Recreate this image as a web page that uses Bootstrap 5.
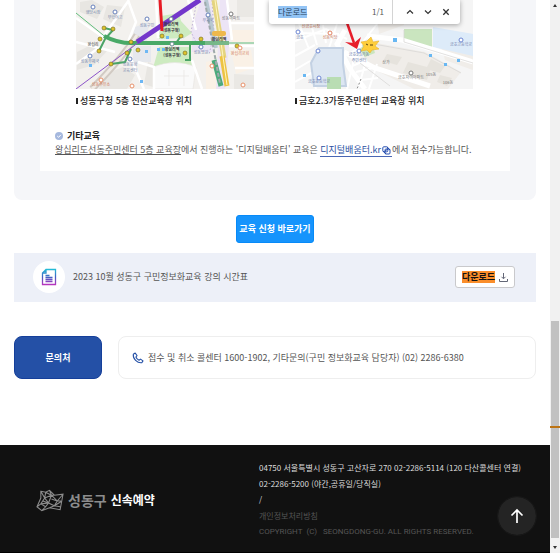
<!DOCTYPE html>
<html lang="ko">
<head>
<meta charset="utf-8">
<meta name="viewport" content="width=device-width, initial-scale=1">
<title>성동구 신속예약</title>
<link href="https://cdn.jsdelivr.net/npm/bootstrap@5.3.0/dist/css/bootstrap.min.css" rel="stylesheet">
<style>
body{font-family:"Noto Sans CJK KR",sans-serif;font-size:9px;line-height:14px;color:#555;background:#fff}
.page-main{padding:0 14px}
.info-panel{background:#f5f6f9;border-radius:0 0 8px 8px;padding:0 26px 29px}
.info-body{background:#fff;padding-bottom:14px}
.maps{display:grid;grid-template-columns:1fr 1fr;gap:41px;padding:0 37px 0 36px}
.maps svg{display:block;width:100%;height:89px}
.maps circle{r:2px}
.maps figcaption{color:#222;font-weight:500;margin-top:5px;white-space:nowrap}
.maps figcaption::before{content:"";display:inline-block;width:2px;height:6px;background:#222;margin-right:2px}
.etc{padding:21px 15px 0}
.etc h2{font-size:9px;line-height:14px;color:#222}
.etc a{color:#274e9f;text-decoration:none;border-bottom:1px solid #4966b4}
.etc a svg{margin:0 1px}
.apply-btn{--bs-btn-bg:#1694fc;--bs-btn-border-color:#078af8;--bs-btn-color:#fff;--bs-btn-hover-bg:#078af8;--bs-btn-hover-color:#fff;--bs-btn-font-size:9px;--bs-btn-padding-x:2px;--bs-btn-padding-y:6px;--bs-btn-border-radius:3px;line-height:14px;margin:15px 0 10px}
.file-bar{background:#edf0f8;padding:8px 21px 9px 19px}
.file-icon{width:32px;height:32px;background:#fff}
.down-btn{--bs-btn-bg:#fff;--bs-btn-border-color:#c9c9cc;--bs-btn-color:#222;--bs-btn-font-size:9px;--bs-btn-padding-x:6px;--bs-btn-padding-y:4px;--bs-btn-border-radius:3px;line-height:14px}
.found{background:#fa8e2b;color:#111;line-height:12px}
.contact{margin-top:34px;margin-bottom:66px;gap:16px}
.contact-title{width:88px;background:#2450a6;border:1px solid #153f9a;border-radius:8px;color:#fff;font-size:9px;line-height:14px}
.contact-info{border:1px solid #eee;border-radius:8px;padding:14px 13px 13px}
.site-footer{background:#111;border-bottom:1px solid #000;color:#ddd;font-size:8px;line-height:16px;padding:15px 14px 12px 36px}
.brand{width:223px}
.brand-gu{font-size:14px;line-height:18px;color:#8c8c8c}
.brand-name{font-size:12px;line-height:18px;color:#fff}
.dim,.dim a{color:#555;text-decoration:none}
.copyright{font-family:Roboto,sans-serif}
.top-btn{right:14px;bottom:17px;width:38px;height:38px;background:#242424;outline:1px solid #181818}
.find-box{left:269px;top:0;width:191px;height:24px;background:#fff;border-radius:0 0 3px 3px;box-shadow:0 1px 5px rgba(0,0,0,.35);padding:0 9px;font-size:8px;z-index:3}
.find-box input{width:80px;border:0;padding:0;outline:0;font-size:8px;line-height:12px;height:12px;color:#27425c;background:linear-gradient(#93c4f5,#93c4f5) left/29px 100% no-repeat}
.find-box .icon-btn{border:0;background:none;padding:0;width:10px;display:flex}
.scroll-track{width:10px;background:#f1f1f1}
.scroll-thumb{width:8px;background:#c1c1c1;flex:216 0 0}
.scroll-rest{flex:312 0 0}
.scroll-mark{top:77%;height:2px;background:#bd7414}
</style>
<script src="https://cdn.jsdelivr.net/npm/bootstrap@5.3.0/dist/js/bootstrap.bundle.min.js"></script>
</head>
<body>
<div class="d-flex min-vh-100 position-relative">
<div class="find-box position-absolute d-flex align-items-center" role="search">
  <input type="text" value="다운로드" aria-label="페이지에서 찾기">
  <span class="ms-auto me-2">1/1</span>
  <span class="vr me-2"></span>
  <div class="d-flex gap-2 ms-1">
    <button class="icon-btn" aria-label="이전"><svg width="10" height="10" viewBox="0 0 10 10" fill="none" stroke="#333" stroke-width="1.2"><path d="M2 6.5l3-3 3 3"/></svg></button>
    <button class="icon-btn" aria-label="다음"><svg width="10" height="10" viewBox="0 0 10 10" fill="none" stroke="#333" stroke-width="1.2"><path d="M2 3.5l3 3 3-3"/></svg></button>
    <button class="icon-btn" aria-label="닫기"><svg width="10" height="10" viewBox="0 0 10 10" fill="none" stroke="#333" stroke-width="1.3"><path d="M2.3 2.3l5.4 5.4M7.7 2.3L2.3 7.7"/></svg></button>
  </div>
</div>
<div class="d-flex flex-column flex-grow-1">
<main class="page-main flex-grow-1">
  <section class="info-panel">
    <div class="info-body">
      <div class="maps">
        <figure class="m-0">
          <svg viewBox="0 0 178 89" preserveAspectRatio="xMidYMid slice" role="img" aria-label="성동구청 약도" font-size="4" text-anchor="middle" fill="#7486ad">
            <path fill="#f3f1ee" d="M0 0h178v89H0z"/>
            <path fill="#e8e6e2" d="M4 2l12-2 12 7-7 12-17-7zM31 5l18 2-4 20-18-8zM1 52l18-9 12 8-13 14-17 5zM27 75l20-8 12 8-8 14H23zM72 62l10 4-5 21-9-3zM92 70l20-2 4 14-22 3z"/>
            <path fill="#faf1e6" d="M156 30h22v12h-22zM130 62l12-3v30h-12zM155 50h20l3 18-18 6z"/>
            <path fill="#e6e8ed" d="M59 27l14-5-2 20-16 1zM57 46h18v16H57z"/>
            <path fill="#eae8e4" d="M161 0h17v17h-17zM158 74l20 1v14h-20z"/>
            <path fill="#cdebc0" d="M85 16l18-3 2 8 11 12-8 5-25 1zM83 47h31l2 21-19-4-20 4z"/>
            <path fill="#fafafa" stroke="#e5e3df" stroke-width=".6" d="M77 67q22-9 43 0l-3 22H78zM88 76h25M93 70v16M108 70v16"/>
            <path fill="#ece4f5" d="M125 0h10l4 35-2 17h-21V28zM144 0h8l3 25-6 64h-9z"/>
            <path stroke="#fff" stroke-width="2.5" fill="none" d="M0 18l27 19L53 0M0 42l39 10M52 0l8 22L50 47l18 42M0 64l24-17M80 0l2 38M112 0l8 30M116 60l10 29M151 0l5 40M154 23h24M153 46h25M159 68h19M62 62l16 5v22"/>
            <path stroke="#d1cac3" stroke-width="7" fill="none" d="M61 35Q48 56 16 89"/>
            <path stroke="#f0ebe5" stroke-width="3" fill="none" d="M61 35Q48 56 16 89"/>
            <path stroke="#bdaed3" stroke-dasharray="1.5 2" fill="none" d="M121 0l-6 32 9 18M136 0l2 33-5 22M86 36l9-9 14 12"/>
            <path stroke="#b7c8d2" stroke-width="4" d="M130 0l10 48"/>
            <path stroke="#4caa7c" stroke-width="5" d="M138 60l7 26"/>
            <path stroke="#9faaac" stroke-width="2" stroke-dasharray="4 2" d="M129 2l15 82"/>
            <path stroke="#e4d480" stroke-width="5" d="M138 0l10 58"/>
            <path stroke="#edc344" stroke-width="5" d="M146 56l5 30"/>
            <path stroke="#fff6be" stroke-width="1" d="M139 0l12 85"/>
            <path stroke="#62bd7d" stroke-width="1" fill="none" d="M0 13l32 26M128 43h50"/>
            <path stroke="#49a967" stroke-width="4" fill="none" d="M28 36Q43 44 59 43H130"/>
            <path stroke="#77b889" stroke-width="4" d="M129 43h24"/>
            <path stroke="#4ba467" stroke-width="2" fill="none" d="M28 28l9 2-8 9-6 12M55 49l-6 13-14 2M105 36l-5 7M114 44v16h-5"/>
            <path stroke="#8c54c9" stroke-width="1" fill="none" d="M0 89l51-38 12-9"/>
            <path stroke="#7337cb" stroke-width="5" d="M61 42L124 0"/>
            <g stroke="#70651c" stroke-width=".6" fill="#dcc32d"><circle cx="28" cy="28" r="2"/><circle cx="37" cy="29" r="2"/><circle cx="23" cy="51" r="2"/><circle cx="24" cy="39" r="2"/><circle cx="55" cy="42" r="2"/><circle cx="62" cy="50" r="2"/><circle cx="51" cy="53" r="2"/><circle cx="35" cy="64" r="2"/><circle cx="105" cy="36" r="2"/><circle cx="86" cy="36" r="2"/><circle cx="109" cy="53" r="2"/><circle cx="125" cy="39" r="2"/><circle cx="161" cy="46" r="2"/></g>
            <g fill="#fff" stroke="#6680bb" stroke-width="1"><circle cx="17" cy="7" r="2"/><circle cx="39" cy="12" r="2"/><circle cx="71" cy="19" r="2"/><circle cx="14" cy="56" r="2"/><circle cx="54" cy="59" r="2"/><circle cx="132" cy="15" r="2"/><circle cx="125" cy="47" r="2"/></g>
            <g fill="#fff" stroke="#e89068" stroke-width="1"><circle cx="25" cy="80" r="2"/><circle cx="56" cy="86" r="2"/><circle cx="136" cy="66" r="2"/><circle cx="164" cy="48" r="2"/><circle cx="167" cy="85" r="2"/></g>
            <circle cx="155" cy="14" r="2" fill="#fff" stroke="#777"/>
            <path fill="#6db7f4" d="M90 36h3v3h-3zM86 48h3v3h-3zM81 48h3v3h-3zM69 50h3v3h-3zM13 64h3v3h-3zM64 80h3v3h-3z"/>
            <g fill="#fff" stroke="#6d8b90" stroke-width="1"><circle cx="95" cy="19" r="2"/><circle cx="96" cy="44" r="2"/></g>
            <text x="17" y="14">행당시장</text><text x="39" y="19">무학여고</text><text x="71" y="27">성동구민</text><text x="17" y="46" fill="#444">왕십리</text><text x="14" y="63">성동우체국</text><text x="54" y="66">성동문화</text><text x="54" y="72">교육센터</text><text x="25" y="86" fill="#d38362">성동주유소</text><text x="132" y="22">우체국</text><text x="155" y="20" fill="#777">성동아파트</text><text x="125" y="54">성동병원</text><text x="164" y="55" fill="#d38362">왕십리교회</text>
            <g fill="#343541" font-weight="700"><text x="95" y="26">왕십리역</text><text x="95" y="32">(성동구청)</text><text x="96" y="51">왕십리역</text><text x="96" y="57">(성동구청)</text><text x="143" y="41">왕십리역</text></g>
            <rect x="136" y="31" width="14" height="5" rx="2" fill="#eeb84c"/>
            <path stroke="#e71a24" stroke-width="3" d="M84 0l2 31"/>
          </svg>
          <figcaption>성동구청 5층 전산교육장 위치</figcaption>
        </figure>
        <figure class="m-0">
          <svg viewBox="0 0 178 89" preserveAspectRatio="xMidYMid slice" role="img" aria-label="금호2.3가동주민센터 약도" font-size="4" text-anchor="middle" fill="#6f81ad">
            <path fill="#f5f5f5" d="M0 0h178v89H0z"/>
            <path fill="#f0ede9" d="M76 42l54 10 36 20-13 17h-34L66 63zM80 0h29v25l-25 9zM146 45l32 7v18l-28-10z"/>
            <path fill="#cae5bf" d="M109 29h28v22l-28-10zM63 48l13-8 4 13-10 4z"/>
            <path fill="#ddebf9" d="M138 27l40 7v22l-40-9z"/>
            <path fill="#dce6f2" d="M24 47h25v37H16V62z"/>
            <g stroke="#fff" fill="none"><path stroke-width="5" d="M50 30l-8 14 13 25 15 20M72 36l35 4 71 22M49 52l31 16 55 18"/><path stroke-width="2" d="M0 41l31-12 21 10M0 56l20-11M4 24l10 25M16 24l6 21M28 25l3 18M42 24l-8 24M0 33l44 1M0 70l15-9M0 82l16-9 5 16M50 56l17-10M57 66l15-6M61 72l17-4M65 80l18-2M59 59l-7 30M71 61l-8 28M82 64l-8 25M82 24l-18 23"/></g>
            <path fill="#dce6f2" stroke="#c3d1e3" stroke-width="2" d="M24 48h24v16l3 22H19l-3-23z"/>
            <path fill="#b9ddb3" d="M32 77h14v12H32z"/>
            <path d="M73 43l56 10 37 20M109 30v12l69 21M65 63l30 23" stroke="#d6d4d2" stroke-width=".7" fill="none"/>
            <path stroke="#888" stroke-dasharray="2 2" d="M66 79l-4 10"/>
            <path fill="#e6e3dd" d="M92 54l15 3-5 8-14-4zM113 62l23 6-4 12-24-7zM136 59l14 7-5 7-14-4zM145 75l12 3-5 8-10-4z"/>
            <g fill="#fff" stroke="#6c86d2" stroke-width="1"><circle cx="23" cy="51" r="2"/><circle cx="3" cy="32" r="2"/><circle cx="24" cy="78" r="2"/><circle cx="64" cy="51" r="2"/><circle cx="166" cy="40" r="2"/></g>
            <circle cx="35" cy="33" r="2" fill="#fff" stroke="#df8060"/><circle cx="116" cy="73" r="2" fill="#fff" stroke="#777"/>
            <path fill="#68b7f2" d="M98 38h4v4h-4zM134 54h3v3h-3zM149 63h3v3h-3zM162 59h3v3h-3zM8 74h3v3H8z"/>
            <text x="5" y="39">금호</text><text x="35" y="39" fill="#cc785b">성동식당</text><text x="16" y="28" fill="#cc785b">신금호시장</text><text x="24" y="83">금호초등학교</text><text x="64" y="56">금호2.3가동</text><text x="64" y="62">주민센터</text><text x="166" y="46">금호고등학교</text><g fill="#777"><text x="116" y="79">금호자이아파트</text><text x="91" y="64">상가</text><text x="136" y="76">105동</text><text x="153" y="84">106동</text></g>
            <path stroke="#e71d2b" stroke-width="2.5" d="M51 20l8 23"/><path fill="#e71d2b" d="M50 42l9 1 7-6-4 12z"/>
            <path fill="#ffce3c" stroke="#e8b12c" stroke-width=".6" d="M76 37l2 5 6-1-4 5 4 3-7 1-2 3-3-3-6 1 3-5-3-4 6-1z"/><path d="M71 44l2 1m2 0h3" stroke="#594414"/>
          </svg>
          <figcaption>금호2.3가동주민센터 교육장 위치</figcaption>
        </figure>
      </div>
      <div class="etc">
        <h2 class="d-flex align-items-center gap-1 fw-bold mb-0">
          <svg width="8" height="8" viewBox="0 0 8 8"><circle cx="4" cy="4" r="4" fill="#a5b8de"/><path d="M2.2 4l1.4 1.3 2.3-2.5" fill="none" stroke="#fff"/></svg>기타교육</h2>
        <p class="mb-0"><u>왕십리도선동주민센터 5층 교육장</u>에서 진행하는 '디지털배움터' 교육은 <a href="#">디지털배움터.kr<svg width="9" height="9" viewBox="0 0 9 9" fill="none" stroke="#274eaf" stroke-width="1"><rect x=".8" y=".8" width="5" height="5" rx="1"/><rect x="3" y="3" width="5" height="5" rx="1"/><path d="M1 5l3 3M5 1l3 3M3 5l3-2"/></svg></a>에서 접수가능합니다.</p>
      </div>
    </div>
  </section>
  <div class="text-center"><a href="#" class="btn apply-btn fw-bold">교육 신청 바로가기</a></div>
  <section class="file-bar d-flex align-items-center">
    <span class="file-icon rounded-circle d-flex align-items-center justify-content-center me-2 flex-shrink-0">
      <svg width="16" height="18" viewBox="0 0 16 18" fill="none" stroke="url(#doc)" stroke-width="1.3"><defs><linearGradient id="doc" gradientUnits="userSpaceOnUse" x1="0" y1="1" x2="0" y2="17"><stop stop-color="#22bfd7"/><stop offset=".5" stop-color="#405fc2"/><stop offset="1" stop-color="#bd32bd"/></linearGradient></defs><path d="M5 1.5h9.5v15h-13V5zM5 1.5V5H1.5M4.5 7.5h4M4.5 9.5h7M4.5 11.5h7M4.5 13.5h7"/></svg>
    </span>
    <span>2023 10월 성동구 구민정보화교육 강의 시간표</span>
    <button class="btn down-btn d-flex align-items-center gap-1 ms-auto fw-bold"><span class="found">다운로드</span><svg width="9" height="9" viewBox="0 0 9 9" fill="none" stroke="#636777"><path d="M4.5 0v5.5M2.5 3.8l2 2 2-2M.5 6v2.5h8V6"/></svg></button>
  </section>
  <section class="contact d-flex">
    <h2 class="contact-title d-flex align-items-center justify-content-center fw-bold mb-0 flex-shrink-0">문의처</h2>
    <div class="contact-info d-flex align-items-center flex-grow-1">
      <svg class="me-1 flex-shrink-0" width="12" height="12" viewBox="0 0 12 12" fill="none" stroke="#2450a6" stroke-width="1.1"><path d="M3.2 1L1.3 2.2C.7 6.7 5.2 11.2 9.8 10.7L11 8.9 8.5 7.1 7 8.2C5.5 7.5 4.4 6.3 3.9 5L5 3.6z" stroke-linejoin="round"/></svg>
      <span>접수 및 취소 콜센터 1600-1902, 기타문의(구민 정보화교육 담당자) (02) 2286-6380</span>
    </div>
  </section>
</main>
<footer class="site-footer d-flex align-items-center position-relative">
  <div class="brand d-flex align-items-center flex-shrink-0">
    <svg width="28" height="23" viewBox="0 0 29 23" fill="none" stroke="#8c8c8c" stroke-width="1.1"><path d="M5 2l5 1 4-2 5 5 9-1-3 16-11-2-8 3-5-4 4-9zM5 2l4 7-4 6-4 3M9 9l1-6M9 9l7-3 3 0M16 6l-3 8-8 1M13 14l6 3 8-5M13 14l-3 4-4 4M19 17l-5 2M19 17l6 1M16 6l6 6-3 5M22 12l6-7M14 1l2 5M9 9l4 5M5 15l5 3M22 12l4 0M10 3l6 3M16 10l6 2M7 12l6 2"/></svg>
    <span class="brand-gu fw-bold ms-1">성동구</span><span class="brand-name fw-bold ms-1">신속예약</span>
  </div>
  <div>
    <div>04750 서울특별시 성동구 고산자로 270 02-2286-5114 (120 다산콜센터 연결)</div>
    <div>02-2286-5200 (야간,공휴일/당직실)</div>
    <div>/</div>
    <div class="dim"><a href="#">개인정보처리방침</a></div>
    <div class="dim copyright">COPYRIGHT&nbsp; (C) &nbsp; SEONGDONG-GU. ALL RIGHTS RESERVED.</div>
  </div>
  <button class="top-btn btn p-0 rounded-circle position-absolute d-flex align-items-center justify-content-center" aria-label="맨 위로"><svg width="14" height="16" viewBox="0 0 14 16" fill="none" stroke="#fff" stroke-width="1.7"><path d="M7 15V2M1.5 7.5L7 2l5.5 5.5"/></svg></button>
</footer>
</div>
<div class="scroll-track position-relative d-flex flex-column align-items-center flex-shrink-0 pt-1 pb-1" aria-hidden="true">
  <svg width="4" height="3" viewBox="0 0 4 3"><path d="M0 3l2-3 2 3z" fill="#333"/></svg>
  <div class="scroll-rest"></div><div class="scroll-thumb mb-2"></div>
  <svg width="4" height="3" viewBox="0 0 4 3"><path d="M0 0l2 3 2-3z" fill="#333"/></svg>
  <div class="scroll-mark position-absolute w-100"></div>
</div>
</div>
</body>
</html>
